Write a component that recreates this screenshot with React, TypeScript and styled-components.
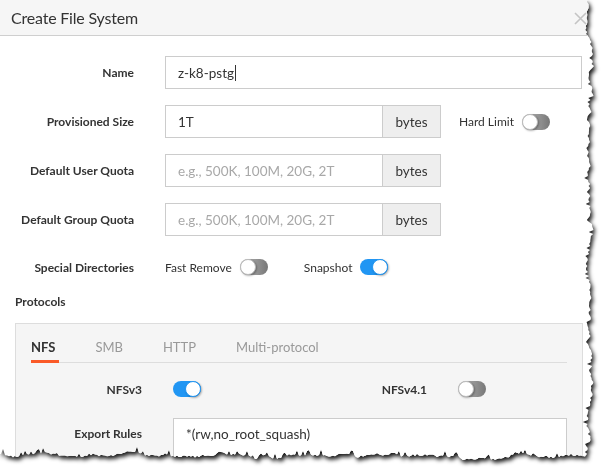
import React from "react"
import styled, { createGlobalStyle } from "styled-components"

const GlobalStyle = createGlobalStyle`
  html, body {
    margin: 0;
    padding: 0;
    background: #fff;
  }

  body {
    font-family: Lato, "Liberation Sans", sans-serif;
    color: #333;
  }
`

const DIALOG_WIDTH = 598
const DIALOG_HEIGHT = 470

// torn paper edge along the right and bottom sides
const tornEdge = (width: number, height: number) => {
  let seed = 11
  const rand = () => {
    seed = (seed * 16807) % 2147483647
    return seed / 2147483647
  }
  const points: string[] = ["0px 0px"]
  const rightBase = width - 9
  const bottomBase = height - 14
  let x = rightBase
  for (let y = 0; y < bottomBase; y += 2) {
    x += (rand() - 0.5) * 4
    x += (rightBase - x) * 0.15
    const spike = rand() > 0.85 ? -rand() * 5 : 0
    points.push(`${(x + spike).toFixed(1)}px ${y}px`)
  }
  let y = bottomBase
  for (let px = Math.round(x); px >= 0; px -= 2) {
    y += (rand() - 0.5) * 4
    y += (bottomBase - y) * 0.15
    const spike = rand() > 0.8 ? -rand() * 6 : 0
    points.push(`${px}px ${(y + spike).toFixed(1)}px`)
  }
  points.push(`0px ${y.toFixed(1)}px`)
  return `polygon(${points.join(", ")})`
}

const Page = styled.div`
  width: 606px;
  height: 472px;
  overflow: hidden;
  background: #fff;
`

const Shadow = styled.div`
  filter: drop-shadow(2px 3px 2px rgba(0, 0, 0, 0.9));
`

const Dialog = styled.div`
  width: ${DIALOG_WIDTH}px;
  height: ${DIALOG_HEIGHT}px;
  overflow: hidden;
  background: #fff;
`

const Header = styled.div`
  display: flex;
  align-items: center;
  justify-content: space-between;
  height: 35px;
  padding: 0 11px;
  background: #f6f6f6;
  border-bottom: 1px solid #cfcfcf;
`

const Title = styled.h4`
  margin: 0;
  font-size: 16px;
  font-weight: 400;
  letter-spacing: -0.2px;
  color: #333;
`

const Close = styled.svg`
  width: 13px;
  height: 13px;
  margin-top: 1px;
`

const Body = styled.div`
  padding: 20px 16px 0 0;
`

const Row = styled.div<{ $height?: number; $gap?: number }>`
  display: flex;
  align-items: center;
  height: ${(p) => p.$height ?? 33}px;
  margin-bottom: ${(p) => p.$gap ?? 16}px;
`

const Label = styled.label<{ $width?: number }>`
  flex: none;
  width: ${(p) => p.$width ?? 134}px;
  margin-right: 31px;
  text-align: right;
  font-size: 12px;
  font-weight: 700;
  color: #333;
`

const InputBox = styled.div<{ $width?: number }>`
  box-sizing: border-box;
  display: flex;
  align-items: center;
  flex: ${(p) => (p.$width ? "none" : "1")};
  width: ${(p) => (p.$width ? `${p.$width}px` : "auto")};
  height: 33px;
  padding: 0 12px;
  border: 1px solid #ccc;
  background: #fff;
  font-size: 13.5px;
  color: #333;
`

const Placeholder = styled.span`
  color: #a8a8a8;
`

const Caret = styled.span`
  display: inline-block;
  width: 1px;
  height: 16px;
  margin-left: 1px;
  background: #333;
`

const InputGroup = styled.div`
  display: flex;
  flex: none;
`

const Addon = styled.span`
  box-sizing: border-box;
  display: flex;
  align-items: center;
  justify-content: center;
  width: 58px;
  height: 33px;
  border: 1px solid #ccc;
  border-left: none;
  background: #eee;
  font-size: 13.5px;
  color: #333;
`

const Option = styled.span<{ $space?: number }>`
  display: flex;
  align-items: center;
  gap: 8px;
  margin-left: ${(p) => p.$space ?? 0}px;
  font-size: 12px;
  color: #333;
`

const Switch = styled.span<{ $on?: boolean }>`
  position: relative;
  display: inline-block;
  flex: none;
  width: 28px;
  height: 16px;
  border-radius: 8px;
  background: ${(p) =>
    p.$on ? "#2196f3" : "linear-gradient(to right, #bdbdbd, #777)"};

  &::after {
    content: "";
    position: absolute;
    top: 0;
    left: ${(p) => (p.$on ? "12px" : "0")};
    box-sizing: border-box;
    width: 16px;
    height: 16px;
    border-radius: 50%;
    border: 1px solid ${(p) => (p.$on ? "#2196f3" : "#bbb")};
    background: #fff;
    box-shadow: 1px 1px 2px rgba(0, 0, 0, 0.3);
  }
`

const SectionTitle = styled.div`
  margin: 0 0 13px 15px;
  line-height: 16px;
  font-size: 12px;
  font-weight: 700;
  color: #333;
`

const Panel = styled.div`
  margin: 0 15px;
  padding: 15px 15px 20px;
  background: #f5f5f5;
  border: 1px solid #ddd;
`

const Tabs = styled.div`
  display: flex;
  gap: 36px;
  border-bottom: 1px solid #ddd;
`

const Tab = styled.span<{ $active?: boolean }>`
  padding: 0 4px 5px 0;
  margin-bottom: -1px;
  line-height: 16px;
  font-size: 13px;
  font-weight: ${(p) => (p.$active ? 700 : 400)};
  color: ${(p) => (p.$active ? "#333" : "#999")};
  border-bottom: 3px solid ${(p) => (p.$active ? "#fa5a28" : "transparent")};
`

const PanelRow = styled.div<{ $top: number }>`
  display: flex;
  align-items: flex-start;
  margin-top: ${(p) => p.$top}px;
`

const Pair = styled.div<{ $width?: number }>`
  display: flex;
  align-items: center;
  flex: none;
  width: ${(p) => (p.$width ? `${p.$width}px` : "auto")};
`

const RulesLabel = styled(Label)`
  margin-top: 8px;
`

const Rules = styled.div`
  flex: 1;
  box-sizing: border-box;
  height: 70px;
  padding: 7px 12px;
  border: 1px solid #ccc;
  background: #fff;
  font-size: 13.5px;
  line-height: 16px;
  color: #333;
`

const tornClip = tornEdge(DIALOG_WIDTH, DIALOG_HEIGHT)
const QUOTA_HINT = "e.g., 500K, 100M, 20G, 2T"

export default function App() {
  return (
    <Page>
      <GlobalStyle />
      <Shadow>
        <Dialog style={{ clipPath: tornClip }}>
          <Header>
            <Title>Create File System</Title>
            <Close viewBox="0 0 13 13">
              <path
                d="M1 1 L12 12 M12 1 L1 12"
                stroke="#c4c4c4"
                strokeWidth="1.6"
                fill="none"
              />
            </Close>
          </Header>

          <Body>
            <Row>
              <Label>Name</Label>
              <InputBox>
                z-k8-pstg
                <Caret />
              </InputBox>
            </Row>

            <Row>
              <Label>Provisioned Size</Label>
              <InputGroup>
                <InputBox $width={218}>1T</InputBox>
                <Addon>bytes</Addon>
              </InputGroup>
              <Option $space={18}>
                Hard Limit <Switch />
              </Option>
            </Row>

            <Row>
              <Label>Default User Quota</Label>
              <InputGroup>
                <InputBox $width={218}>
                  <Placeholder>{QUOTA_HINT}</Placeholder>
                </InputBox>
                <Addon>bytes</Addon>
              </InputGroup>
            </Row>

            <Row>
              <Label>Default Group Quota</Label>
              <InputGroup>
                <InputBox $width={218}>
                  <Placeholder>{QUOTA_HINT}</Placeholder>
                </InputBox>
                <Addon>bytes</Addon>
              </InputGroup>
            </Row>

            <Row $height={30} $gap={12}>
              <Label>Special Directories</Label>
              <Option>
                Fast Remove <Switch />
              </Option>
              <Option $space={36}>
                Snapshot <Switch $on />
              </Option>
            </Row>
          </Body>

          <SectionTitle>Protocols</SectionTitle>

          <Panel>
            <Tabs>
              <Tab $active>NFS</Tab>
              <Tab>SMB</Tab>
              <Tab>HTTP</Tab>
              <Tab>Multi-protocol</Tab>
            </Tabs>

            <PanelRow $top={18}>
              <Pair $width={285}>
                <Label $width={111}>NFSv3</Label>
                <Switch $on />
              </Pair>
              <Pair>
                <Label $width={111}>NFSv4.1</Label>
                <Switch />
              </Pair>
            </PanelRow>

            <PanelRow $top={21}>
              <RulesLabel $width={111}>Export Rules</RulesLabel>
              <Rules>*(rw,no_root_squash)</Rules>
            </PanelRow>
          </Panel>
        </Dialog>
      </Shadow>
    </Page>
  )
}
